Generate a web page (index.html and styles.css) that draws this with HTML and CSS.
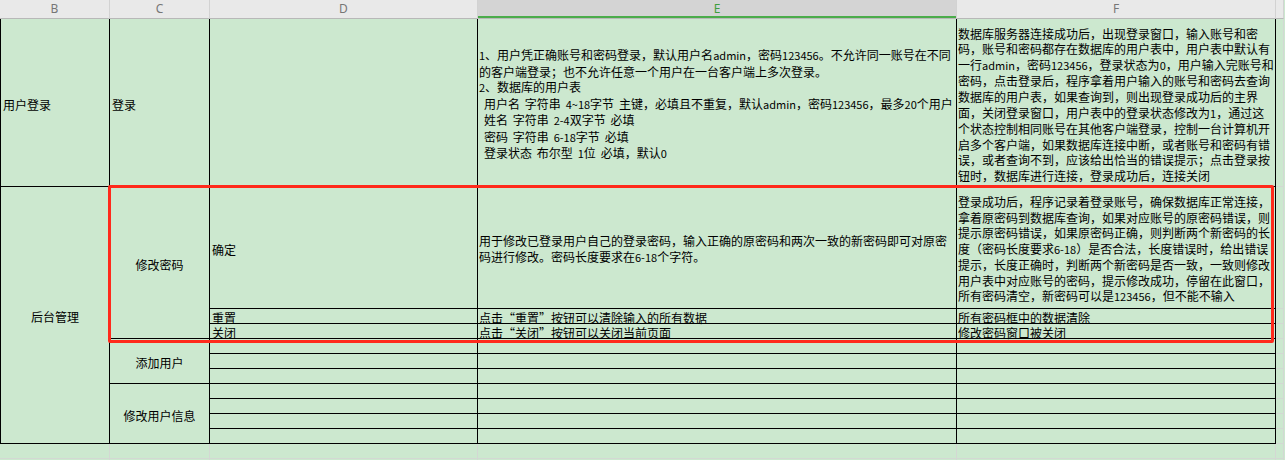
FILE: index.html
```html
<!DOCTYPE html>
<html lang="zh-CN">
<head>
<meta charset="utf-8">
<title>功能需求表</title>
<link rel="stylesheet" href="styles.css">
</head>
<body>
<div class="sheet">
  <div class="hd">B</div>
  <div class="hd">C</div>
  <div class="hd">D</div>
  <div class="hd sel">E</div>
  <div class="hd">F</div>
  <div class="hd"></div>

  <div class="c first">用户登录</div>
  <div class="c">登录</div>
  <div class="c"></div>
  <div class="c txt spaced"><div class="t"><span class="en">1</span>、用户凭正确账号和密码登录，默认用户名<span class="en">admin</span>，密码<span class="en">123456</span>。不允许同一账号在不同<br>的客户端登录；也不允许任意一个用户在一台客户端上多次登录。<br><span class="en">2</span>、数据库的用户表<br> 用户名 字符串 <span class="en">4~18</span>字节 主键，必填且不重复，默认<span class="en">admin</span>，密码<span class="en">123456</span>，最多<span class="en">20</span>个用户<br> 姓名 字符串 <span class="en">2-4</span>双字节 必填<br> 密码 字符串 <span class="en">6-18</span>字节 必填<br> 登录状态 布尔型 <span class="en">1</span>位 必填，默认<span class="en">0</span></div></div>
  <div class="c txt"><div class="t">数据库服务器连接成功后，出现登录窗口，输入账号和密<br>码，账号和密码都存在数据库的用户表中，用户表中默认有<br>一行<span class="en">admin</span>，密码<span class="en">123456</span>，登录状态为<span class="en">0</span>，用户输入完账号和<br>密码，点击登录后，程序拿着用户输入的账号和密码去查询<br>数据库的用户表，如果查询到，则出现登录成功后的主界<br>面，关闭登录窗口，用户表中的登录状态修改为<span class="en">1</span>，通过这<br>个状态控制相同账号在其他客户端登录，控制一台计算机开<br>启多个客户端，如果数据库连接中断，或者账号和密码有错<br>误，或者查询不到，应该给出恰当的错误提示；点击登录按<br>钮时，数据库进行连接，登录成功后，连接关闭</div></div>
  <div class="g"></div>

  <div class="c first mid span-admin">后台管理</div>
  <div class="c mid span-pwd">修改密码</div>
  <div class="c">确定</div>
  <div class="c txt"><div class="t">用于修改已登录用户自己的登录密码，输入正确的原密码和两次一致的新密码即可对原密<br>码进行修改。密码长度要求在<span class="en">6-18</span>个字符。</div></div>
  <div class="c txt"><div class="t">登录成功后，程序记录着登录账号，确保数据库正常连接，<br>拿着原密码到数据库查询，如果对应账号的原密码错误，则<br>提示原密码错误，如果原密码正确，则判断两个新密码的长<br>度（密码长度要求<span class="en">6-18</span>）是否合法，长度错误时，给出错误<br>提示，长度正确时，判断两个新密码是否一致，一致则修改<br>用户表中对应账号的密码，提示修改成功，停留在此窗口，<br>所有密码清空，新密码可以是<span class="en">123456</span>，但不能不输入</div></div>
  <div class="g"></div>

  <div class="c">重置</div>
  <div class="c txt"><div class="t">点击“重置”按钮可以清除输入的所有数据</div></div>
  <div class="c txt"><div class="t">所有密码框中的数据清除</div></div>
  <div class="g"></div>

  <div class="c">关闭</div>
  <div class="c txt"><div class="t">点击“关闭”按钮可以关闭当前页面</div></div>
  <div class="c txt"><div class="t">修改密码窗口被关闭</div></div>
  <div class="g"></div>

  <div class="c mid span-add">添加用户</div>
  <div class="c"></div><div class="c"></div><div class="c"></div><div class="g"></div>
  <div class="c"></div><div class="c"></div><div class="c"></div><div class="g"></div>
  <div class="c"></div><div class="c"></div><div class="c"></div><div class="g"></div>

  <div class="c mid span-info">修改用户信息</div>
  <div class="c"></div><div class="c"></div><div class="c"></div><div class="g"></div>
  <div class="c"></div><div class="c"></div><div class="c"></div><div class="g"></div>
  <div class="c"></div><div class="c"></div><div class="c"></div><div class="g"></div>
  <div class="c"></div><div class="c"></div><div class="c"></div><div class="g"></div>

  <div class="g"></div><div class="g"></div><div class="g"></div><div class="g"></div><div class="g"></div><div class="g"></div>
  <div class="g"></div><div class="g"></div><div class="g"></div><div class="g"></div><div class="g"></div><div class="g"></div>

  <div class="redbox"></div>
</div>
</body>
</html>
```

FILE: styles.css
```css
html {
  background: #cce8cf;
  overflow: hidden;
}

body {
  margin: 0;
  width: 1285px;
  height: 460px;
  overflow: hidden;
}

.sheet {
  position: relative;
  display: grid;
  grid-template-columns: 110px 100px 268px 479px 319px 8px;
  grid-template-rows: 19px 168px 122px repeat(9, 15px) 15px 15px;
  font-family: "Noto Sans CJK SC", sans-serif;
  font-size: 12px;
  line-height: 15.6px;
  color: #000;
}

.hd {
  display: flex;
  align-items: center;
  justify-content: center;
  background: #e9e9e9;
  border-right: 1px solid #d2d2d2;
  border-bottom: 1px solid #b8b8b8;
  color: #767676;
  font-family: "Noto Sans", sans-serif;
  font-size: 12px;
}

.hd.sel {
  background: #d4d4d4;
  color: #3e9e3e;
  box-shadow: inset 0 -2px 0 #4bac4b;
}

.c {
  display: flex;
  align-items: center;
  border-right: 1px solid #000;
  border-bottom: 1px solid #000;
  padding: 4px 1px 0 2px;
  white-space: nowrap;
}

.c.first {
  border-left: 1px solid #000;
}

.txt {
  padding-left: 1px;
}

.t {
  white-space: pre;
}

.spaced {
  word-spacing: 2.2px;
}

.en {
  font-size: 11px;
}

.mid {
  justify-content: center;
  padding-left: 1px;
}

.span-admin {
  grid-row: span 10;
}

.span-pwd {
  grid-row: span 3;
}

.span-add {
  grid-row: span 3;
}

.span-info {
  grid-row: span 4;
}

.g {
  border-right: 1px solid #d3d8d3;
  border-bottom: 1px solid #d3d8d3;
}

.redbox {
  position: absolute;
  left: 108px;
  top: 185px;
  width: 1166px;
  height: 158px;
  box-sizing: border-box;
  border: 3px solid #ff2a1c;
  border-radius: 2px;
  pointer-events: none;
}
```
